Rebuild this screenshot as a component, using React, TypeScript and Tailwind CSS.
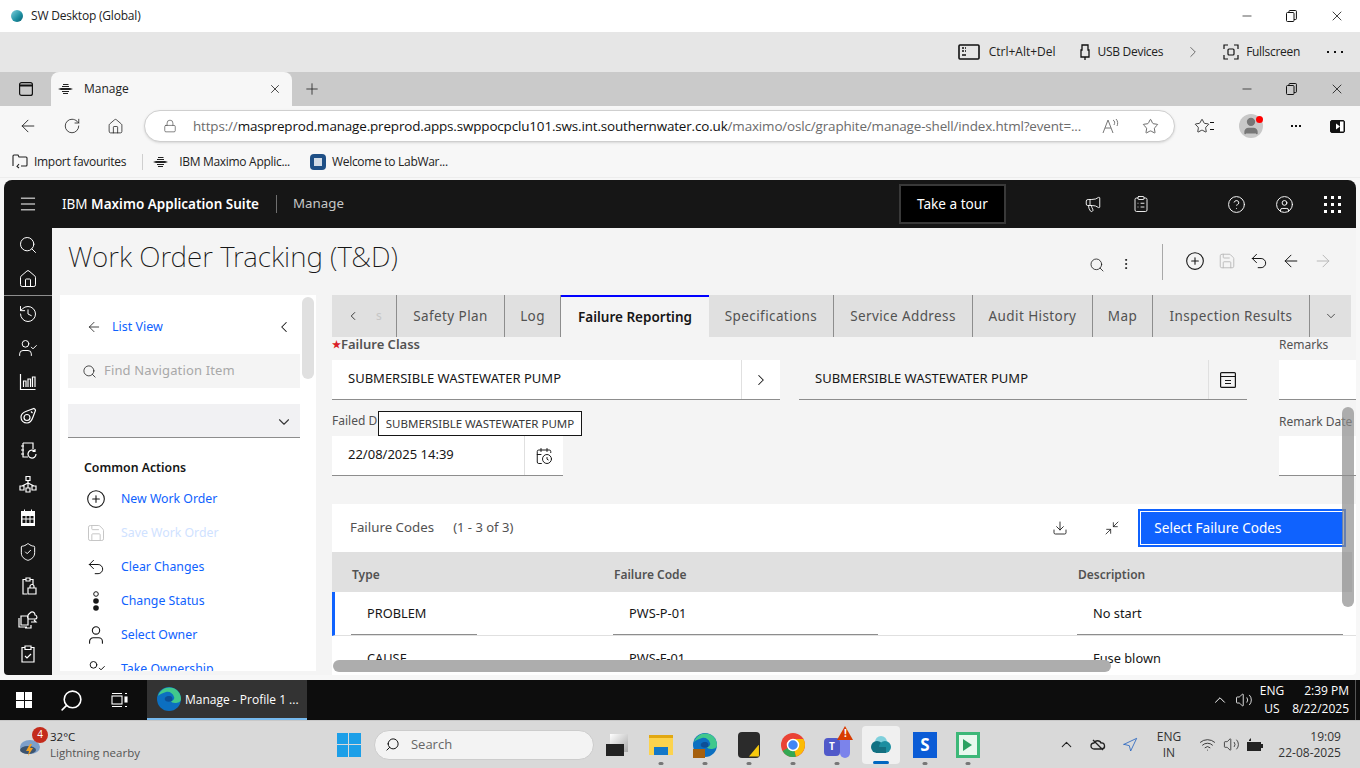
import React from 'react';
import {
  X, Minus, Plus, ChevronRight, ChevronLeft, ChevronDown, ChevronUp, ArrowLeft, ArrowRight, RotateCw, House, Lock,
  Star, Search, Menu, CircleHelp, CircleUser, Volume2, Wifi, Navigation, CirclePlus, Save, Undo2, Download,
  Minimize2, History, UserCheck, ShieldCheck, CalendarClock, ClipboardList, Megaphone, MoreVertical, User,
} from 'lucide-react';

const segoe = 'font-["Open_Sans","Noto_Sans",sans-serif]';
const plex = 'font-["Noto_Sans","Open_Sans",sans-serif]';

function Restore({ size = 11 }: { size?: number }) {
  return (
    <svg width={size} height={size + 1} viewBox="0 0 11 12" fill="none" stroke="#111" strokeWidth="1">
      <rect x="0.5" y="2.5" width="7.5" height="9" rx="1" />
      <path d="M3 2.5V1.2c0-.4.3-.7.7-.7h6c.4 0 .7.3.7.7v7.6c0 .4-.3.7-.7.7H8" />
    </svg>
  );
}

function WindowButtons() {
  return (
    <div className="flex items-center gap-[32px] pr-[15px]">
      <Minus size={14} strokeWidth={1.2} color="#111" />
      <Restore />
      <X size={16} strokeWidth={1.2} color="#111" />
    </div>
  );
}

function Bee() {
  return (
    <svg width="16" height="12" viewBox="0 0 16 12" fill="#222">
      <path d="M5 1h5l1 1H5zM4 3h7v1H4zM3 5h9l3 1-3 1H3L0 6zM4 8h7v1H4zM5 10h5v1H5z" />
    </svg>
  );
}

function SwCloud({ size = 14 }: { size?: number }) {
  return (
    <svg width={size} height={size} viewBox="0 0 14 14">
      <defs>
        <linearGradient id="sw" x1="0" y1="0" x2="1" y2="1">
          <stop offset="0" stopColor="#7fd0dc" />
          <stop offset="0.6" stopColor="#1c8ea0" />
          <stop offset="1" stopColor="#0b5d70" />
        </linearGradient>
      </defs>
      <circle cx="7" cy="7" r="6" fill="url(#sw)" />
    </svg>
  );
}

function EdgeLogo({ size = 24 }: { size?: number }) {
  return (
    <svg width={size} height={size} viewBox="0 0 24 24">
      <circle cx="12" cy="12" r="12" fill="#0c6fc0" />
      <path d="M1 9C3 2 10-1 16 1c5 2 8 6 8 11 0 3-3 4-6 4-2 0-4-1-4-2 2 0 4-2 3-4-1-4-5-6-8-5-4 1-7 3-8 4z" fill="#41c88c" />
      <path d="M12 9c3 0 4 2 3 5-3 1-6 1-7-1-1-2 1-4 4-4z" fill="#0c4f96" />
    </svg>
  );
}

function RailGlyph({ d }: { d: string }) {
  return (
    <svg width="20" height="20" viewBox="0 0 20 20" fill="none" stroke="#fff" strokeWidth="1.2">
      <path d={d} />
    </svg>
  );
}

function RailCalendar() {
  return (
    <svg width="20" height="20" viewBox="0 0 20 20" fill="#fff">
      <path d="M3 3h3V1.5h1V3h6V1.5h1V3h3v15H3zM4.500 8v2.500h3V8zm4 0v2.500h3V8zm4 0v2.500h3V8zm-8 3.500V15h3v-3.500zm4 0V15h3v-3.500zm4 0V15h3v-3.500z" fillRule="evenodd" />
    </svg>
  );
}

function ClassificationIcon() {
  return (
    <svg width="16" height="16" viewBox="0 0 16 16" fill="none" stroke="#161616" strokeWidth="1.200">
      <rect x="0.600" y="0.600" width="14.800" height="14.800" rx="1" />
      <path d="M1 4.500h14M5 8.500h6M5 11.500h6" />
    </svg>
  );
}

function Rail() {
  const s = { size: 20, strokeWidth: 1.2, color: '#fff' };
  return (
    <div className="w-12 shrink-0 bg-[#161616] flex flex-col items-center">
      <div className="h-[68px] w-full border-b border-[#8d8d8d] flex flex-col items-center pt-[7px] gap-3.5">
        <Search {...s} />
        <House {...s} />
      </div>
      <div className="flex flex-col items-center gap-3.5 pt-2">
        <History {...s} />
        <UserCheck {...s} />
        <RailGlyph d="M2.500 2v15.500h15M5.500 15V9h2.500v6M10 15V7h2.500v8M14.500 15V5H17v10" />
        <RailGlyph d="M3 11c0-3 3-5 6-6l7-2.500c1 .5 1.500 1 1.500 2L15 11c-1 3-3 6-6 6-3.500 0-6-2.500-6-6zM6 11.500a3 3 0 1 0 6 0 3 3 0 1 0-6 0zM13 5.500l1.500 1.500" />
        <RailGlyph d="M5 3h10v6M5 3v14h5M3 6h3M3 10h3M3 14h3M18 14a4 4 0 1 1-1.200-2.800M17 9v2.500h-2.500" />
        <RailGlyph d="M8 2.500h4v4H8zM2 12h4v4H2zM14 12h4v4h-4zM8 14h4v4H8zM10 6.500V14M10 9l-6 3M10 9l6 3" />
        <RailCalendar />
        <ShieldCheck {...s} />
        <RailGlyph d="M8 3.500V2h4v1.500h3V9M8 3.500H5V18h4M8 3.500V5h4V3.500M10 12h8v6h-8zM12 12v-1.500a2 2 0 0 1 4 0V12" />
        <RailGlyph d="M3 6h7v9H3zM1 8v9h8M12 3c2-2 5-1 5 2 2 0 3 4 0 4h-6c-2 0-2-4 1-6zM13 12h5l-2-2M7 18h6v-3" />
        <RailGlyph d="M7 3.500V2h6v1.500h3V18H4V3.500zM7 3.500V5.500h6v-2M7 12l2 2 4-4" />
      </div>
    </div>
  );
}

const actions = [
  { label: 'New Work Order', icon: <CirclePlus size={20} strokeWidth={1.3} color="#161616" /> },
  { label: 'Save Work Order', icon: <Save size={20} strokeWidth={1.2} color="#c6c6c6" />, disabled: true },
  { label: 'Clear Changes', icon: <Undo2 size={20} strokeWidth={1.2} color="#161616" /> },
  {
    label: 'Change Status',
    icon: (
      <svg width="10" height="20" viewBox="0 0 10 20" fill="#161616">
        <circle cx="5" cy="3" r="2.300" fill="none" stroke="#161616" />
        <circle cx="5" cy="10" r="2.800" />
        <circle cx="5" cy="17" r="2.800" />
      </svg>
    ),
  },
  { label: 'Select Owner', icon: <User size={22} strokeWidth={1.2} color="#161616" /> },
  { label: 'Take Ownership', icon: <UserCheck size={20} strokeWidth={1.2} color="#161616" /> },
];

function LeftPanel() {
  return (
    <div className={`w-[256px] ml-2 h-[376px] bg-white overflow-hidden relative ${plex}`}>
      <div className="h-[59px] flex items-center pl-[26px] pr-[23px] pt-[5px]">
        <ArrowLeft size={16} strokeWidth={1.2} color="#161616" />
        <span className="ml-2.5 text-[12.5px] text-[#0f62fe]">List View</span>
        <ChevronLeft size={18} strokeWidth={1.4} color="#161616" className="ml-auto" />
      </div>
      <div className="ml-2 mr-4 h-[34px] bg-[#f4f4f4] flex items-center pl-3.5 text-[13px] text-[#a8a8a8] tracking-[0.15px]">
        <Search size={15} strokeWidth={1.2} color="#161616" />
        <span className="ml-[7px]">Find Navigation Item</span>
      </div>
      <div className="ml-2 mr-4 mt-4 h-[34px] bg-[#f1f1f3] border-b border-[#8d8d8d] flex items-center justify-end pr-[7px]">
        <ChevronDown size={18} strokeWidth={1.5} color="#393939" className="mt-0.5" />
      </div>
      <div className="pl-6 pt-[21px] text-[12.3px] font-semibold text-[#161616]">Common Actions</div>
      <div className="mt-[5px] flex flex-col">
        {actions.map(a => (
          <div key={a.label} className="h-[34px] flex items-center shrink-0">
            <div className="w-[61px] pl-[10px] flex justify-center">{a.icon}</div>
            <span className={`text-[12.3px] ${a.disabled ? 'text-[#d0e2ff]' : 'text-[#0f62fe]'}`}>{a.label}</span>
          </div>
        ))}
      </div>
      <div className="absolute top-[2px] right-[2px] w-3 h-[82px] rounded-md bg-[#e0e0e0]" />
    </div>
  );
}

const tabs = [
  { label: 'Safety Plan', w: 'w-[108px]' },
  { label: 'Log', w: 'w-[56px]' },
  { label: 'Failure Reporting', w: 'w-[148px]', active: true },
  { label: 'Specifications', w: 'w-[125px]' },
  { label: 'Service Address', w: 'w-[139px]' },
  { label: 'Audit History', w: 'w-[120px]' },
  { label: 'Map', w: 'w-[60px]' },
  { label: 'Inspection Results', w: 'w-[157px]' },
];

function Tabs() {
  return (
    <div className="w-[1019px] h-[42px] bg-[#e0e0e0] flex text-[13.5px] text-[#525252] tracking-[0.4px] shrink-0">
      <div className="w-[65px] shrink-0 border-r border-[#8d8d8d] flex items-center pl-[14px]">
        <ChevronLeft size={14} strokeWidth={1.4} color="#161616" />
        <span className="ml-4 text-[#c6c6c6] text-[12px]">s</span>
      </div>
      {tabs.map(t => (
        <div
          key={t.label}
          className={`${t.w} shrink-0 flex items-center justify-center pt-px ${
            t.active ? 'bg-[#f4f4f4] border-t-2 border-[#0000ff] font-semibold text-[#161616] tracking-normal' : 'border-r border-[#8d8d8d]'
          }`}
        >
          {t.label}
        </div>
      ))}
      <div className="flex-1 flex items-center justify-center">
        <ChevronDown size={14} strokeWidth={1.2} color="#161616" />
      </div>
    </div>
  );
}

function Field({ text, icon, w, bg }: { text: string; icon: React.ReactNode; w: string; bg: string }) {
  return (
    <div className={`${w} ${bg} h-10 border-b border-[#8d8d8d] flex items-center text-[13px] text-[#161616]`}>
      <span className="flex-1 pl-4 pb-[2px]">{text}</span>
      <div className="w-[39px] h-full border-l border-[#e0e0e0] flex items-center justify-center">{icon}</div>
    </div>
  );
}

const rows = [
  ['PROBLEM', 'PWS-P-01', 'No start'],
  ['CAUSE', 'PWS-F-01', 'Fuse blown'],
];

function FailureCodes() {
  return (
    <div className="w-[1024px] bg-white mt-7 flex-1">
      <div className="h-12 flex items-center pl-[18px]">
        <span className="text-[13.3px] text-[#525252]">Failure Codes</span>
        <span className="ml-[19px] text-[13px] text-[#525252]">(1 - 3 of 3)</span>
        <Download size={16} strokeWidth={1.3} color="#161616" className="ml-[539px]" />
        <Minimize2 size={16} strokeWidth={1.2} color="#161616" className="ml-9" />
        <div className="ml-[18px] w-[208px] h-[38px] border-2 border-[#0f62fe] p-px">
          <div className="h-full bg-[#0f62fe] text-white text-[13.6px] flex items-center pl-[13px]">Select Failure Codes</div>
        </div>
      </div>
      <div className="h-10 bg-[#e0e0e0] flex items-center pt-1.5 text-[12px] font-semibold text-[#525252] w-[1020px]">
        <span className="w-[282px] pl-5">Type</span>
        <span className="w-[464px]">Failure Code</span>
        <span>Description</span>
      </div>
      {rows.map((r, i) => (
        <div key={r[0]} className={`h-11 flex border-b border-[#e0e0e0] text-[12.8px] text-[#161616] ${i === 0 ? 'border-l-[3px] border-l-[#0f62fe]' : 'pl-[3px]'}`}>
          <div className="w-[262px] pl-4">
            <div className={`w-[126px] h-[43px] pl-4 pt-0.5 flex items-center ${i === 0 ? 'border-b border-[#8d8d8d]' : ''}`}>{r[0]}</div>
          </div>
          <div className="w-[464px] pl-4">
            <div className={`w-[265px] h-[43px] pl-4 pt-0.5 flex items-center ${i === 0 ? 'border-b border-[#8d8d8d]' : ''}`}>{r[1]}</div>
          </div>
          <div className="pl-4">
            <div className={`w-[266px] h-[43px] pl-4 pt-0.5 flex items-center ${i === 0 ? 'border-b border-[#8d8d8d]' : ''}`}>{r[2]}</div>
          </div>
        </div>
      ))}
    </div>
  );
}

function RightPane() {
  return (
    <div className={`ml-4 w-[1024px] h-[380px] relative overflow-hidden flex flex-col ${plex}`}>
      <Tabs />
      <div className="flex items-start mt-[1px] text-[12px] text-[#525252]">
        <div className="w-[947px]">
          <div className="h-[22px] font-semibold text-[13px] leading-[12px] flex items-start">
            <span className="text-[#da1e28] text-[10px]">★</span>Failure Class
          </div>
          <div className="flex gap-[19px]">
            <Field text="SUBMERSIBLE WASTEWATER PUMP" icon={<ChevronRight size={18} strokeWidth={1.4} color="#161616" />} w="w-[448px]" bg="bg-white" />
            <Field text="SUBMERSIBLE WASTEWATER PUMP" icon={<ClassificationIcon />} w="w-[448px]" bg="bg-[#f4f4f4]" />
          </div>
          <div className="h-[36px] flex items-end pb-[6px]">Failed D</div>
          <Field text="22/08/2025 14:39" icon={<CalendarClock size={18} strokeWidth={1.3} color="#161616" />} w="w-[231px]" bg="bg-white" />
        </div>
        <div className="flex-1 min-w-0">
          <div className="h-[22px] leading-[14px]">Remarks</div>
          <div className="h-10 bg-white border-b border-[#8d8d8d]" />
          <div className="h-[36px] flex items-end pb-[5px] whitespace-nowrap">Remark Date</div>
          <div className="h-10 bg-white border-b border-[#8d8d8d]" />
        </div>
      </div>
      <FailureCodes />
      <div className="absolute left-[46px] top-[116px] h-[25px] w-[204px] bg-white border border-[#161616] text-[11.5px] text-[#393939] flex items-center justify-center whitespace-nowrap">
        SUBMERSIBLE WASTEWATER PUMP
      </div>
      <div className="absolute left-[1010px] top-[112px] w-3 h-[200px] rounded-md bg-[#8d8d8d]/70" />
      <div className="absolute left-px top-[365px] w-[778px] h-3 rounded-md bg-[#adadad]" />
    </div>
  );
}

function Maximo() {
  return (
    <div className="mx-1 mt-0.5 w-[1352px] h-[495px] rounded-t-lg rounded-b overflow-hidden bg-[#f4f4f4] flex flex-col">
      <div className={`h-12 shrink-0 bg-[#161616] flex items-center text-white ${plex}`}>
        <div className="w-12 flex justify-center"><Menu size={20} strokeWidth={1.2} /></div>
        <span className="ml-2.5 text-[13.5px]">IBM <span className="font-semibold">Maximo Application Suite</span></span>
        <div className="ml-[17px] w-px h-[18px] bg-[#6f6f6f]" />
        <span className="ml-4 text-[13.3px] text-[#c6c6c6]">Manage</span>
        <div className="ml-[555px] w-[107px] h-10 bg-black border-2 border-[#393939] flex items-center justify-center text-[13.6px]">Take a tour</div>
        <Megaphone size={18} strokeWidth={1.2} className="ml-[78px]" />
        <ClipboardList size={18} strokeWidth={1.2} className="ml-[30px]" />
        <CircleHelp size={19} strokeWidth={1.2} className="ml-[77px]" />
        <CircleUser size={19} strokeWidth={1.2} className="ml-[29px]" />
        <div className="ml-[30px] grid grid-cols-3 gap-[4px]">
          {Array.from({ length: 9 }).map((_, i) => (
            <div key={i} className="w-[3px] h-[3px] bg-white" />
          ))}
        </div>
      </div>
      <div className="flex flex-1 min-h-0">
        <Rail />
        <div className="flex-1 flex flex-col">
          <div className={`h-[68px] flex items-start ${plex}`}>
            <h1 className="ml-4 mt-2 w-[331px] text-[27.9px] font-extralight text-[#161616] whitespace-nowrap">Work Order Tracking (T&amp;D)</h1>
            <Search size={16} strokeWidth={1.2} color="#161616" className="ml-[690px] mt-[29px]" />
            <MoreVertical size={14} strokeWidth={1.6} color="#161616" className="ml-[14px] mt-[29px]" />
            <div className="ml-[29px] mt-4 w-px h-9 bg-[#a8a8a8]" />
            <CirclePlus size={20} strokeWidth={1.3} color="#161616" className="ml-[22px] mt-[23px]" />
            <Save size={18} strokeWidth={1.2} color="#b8b8b8" className="ml-[13px] mt-6" />
            <Undo2 size={20} strokeWidth={1.2} color="#161616" className="ml-[13px] mt-[23px]" />
            <ArrowLeft size={20} strokeWidth={1.2} color="#161616" className="ml-3 mt-[23px]" />
            <ArrowRight size={20} strokeWidth={1.2} color="#b8b8b8" className="ml-3 mt-[23px]" />
          </div>
          <div className="flex">
            <LeftPanel />
            <RightPane />
          </div>
        </div>
      </div>
    </div>
  );
}

function BrowserChrome() {
  return (
    <div className={segoe}>
      <div className="h-8 bg-white flex items-center justify-between text-[12px] text-[#222] tracking-[-0.2px]">
        <div className="flex items-center pl-[10px] gap-[7px]"><SwCloud />SW Desktop (Global)</div>
        <WindowButtons />
      </div>
      <div className="h-10 bg-[#e6e6e6] flex items-center justify-end text-[12px] text-[#222] tracking-[-0.3px]">
        <svg width="22" height="16" viewBox="0 0 22 16" fill="none" stroke="#111" strokeWidth="1.6">
          <rect x="1" y="1" width="20" height="14" rx="1" />
          <path d="M4 4h2M7 4h1M4 7h2M7 7h1M4 11h4" />
        </svg>
        <span className="ml-[9px] tracking-normal">Ctrl+Alt+Del</span>
        <svg className="ml-6" width="10" height="16" viewBox="0 0 10 16" fill="none" stroke="#111" strokeWidth="1.3">
          <path d="M2 1h6v5h1v7H1V6h1zM5 13v3M3.500 3.500h0M6.500 3.500h0" />
        </svg>
        <span className="ml-[8px]">USB Devices</span>
        <ChevronRight size={18} strokeWidth={1} color="#444" className="ml-[21px]" />
        <svg className="ml-[21px]" width="16" height="16" viewBox="0 0 16 16" fill="none" stroke="#111" strokeWidth="1.2">
          <path d="M1 5V1h4M11 1h4v4M15 11v4h-4M5 15H1v-4" />
          <rect x="5" y="5" width="6" height="6" rx="1" />
        </svg>
        <span className="ml-[7px]">Fullscreen</span>
        <div className="ml-[27px] mr-[17px] flex gap-[5px]">
          <div className="w-0.5 h-0.5 bg-[#111]" />
          <div className="w-0.5 h-0.5 bg-[#111]" />
          <div className="w-0.5 h-0.5 bg-[#111]" />
        </div>
      </div>
      <div className="h-[34px] bg-[#cacaca] flex items-end justify-between">
        <div className="flex items-end h-full">
          <div className="w-[51px] h-full flex items-center justify-center">
            <svg width="14" height="14" viewBox="0 0 14 14" fill="none" stroke="#111" strokeWidth="1.2">
              <rect x="0.600" y="0.600" width="12.800" height="12.800" rx="2" />
              <path d="M1 3.500h12" strokeWidth="2" />
            </svg>
          </div>
          <div className="w-[241px] h-full bg-[#f7f7f7] rounded-t-lg flex items-center pl-[7px] text-[12px] text-[#222]">
            <Bee />
            <span className="ml-[10px]">Manage</span>
            <X size={14} strokeWidth={1.4} color="#222" className="ml-auto mr-2.5" />
          </div>
          <Plus size={18} strokeWidth={1.1} color="#222" className="ml-[11px] mb-2" />
        </div>
        <div className="h-full flex items-center"><WindowButtons /></div>
      </div>
      <div className="h-10 bg-[#f7f7f7] flex items-center">
        <ArrowLeft size={20} strokeWidth={1.1} color="#222" className="ml-[18px]" />
        <RotateCw size={18} strokeWidth={1.1} color="#222" className="ml-[25px]" />
        <House size={17} strokeWidth={1.1} color="#222" className="ml-[26px]" />
        <div className="ml-[20px] w-[1031px] h-8 bg-white border border-[#cfcfcf] rounded-full flex items-center shadow-sm">
          <Lock size={14} strokeWidth={1.1} color="#444" className="ml-[18px]" />
          <span className="ml-[16px] text-[13.45px] text-[#6b6b6b] whitespace-nowrap tracking-[-0.15px]">
            https://<span className="text-[#111]">maspreprod.manage.preprod.apps.swppocpclu101.sws.int.southernwater.co.uk</span>/maximo/oslc/graphite/manage-shell/index.html?event=...
          </span>
          <svg className="ml-auto" width="18" height="16" viewBox="0 0 18 16" fill="none" stroke="#777" strokeWidth="1">
            <path d="M1 15L6 2l5 13M3 10h6M11 2c2 1 2 3 1 5M14 1c2 2 2 5 1 7" />
          </svg>
          <Star size={17} strokeWidth={1.1} color="#444" className="ml-[22px] mr-[15px]" />
        </div>
        <div className="ml-[19px] relative">
          <Star size={16} strokeWidth={1.2} color="#111" />
          <div className="absolute right-[-4px] top-1 w-1 h-2 border-y border-[#111]" />
        </div>
        <div className="ml-[29px] relative w-6 h-6 rounded-full bg-[#c8c8c8] overflow-hidden flex justify-center">
          <User size={20} fill="#777" color="#777" className="mt-0.5" />
        </div>
        <div className="w-[7px] h-[7px] rounded-full bg-[#f00] ml-[-7px] mb-[14px] z-10" />
        <div className="ml-[28px] flex gap-0.5">
          <div className="w-0.5 h-0.5 bg-[#111]" />
          <div className="w-0.5 h-0.5 bg-[#111]" />
          <div className="w-0.5 h-0.5 bg-[#111]" />
        </div>
        <svg className="ml-[29px]" width="15" height="13" viewBox="0 0 15 13">
          <rect x="0.500" y="0.500" width="14" height="12" rx="1.500" fill="#111" stroke="#111" />
          <path d="M10 6.500L6 3.500v6z" fill="#fff" />
          <rect x="10" y="1.500" width="3.500" height="10" fill="#fff" />
        </svg>
      </div>
      <div className="h-8 bg-[#f7f7f7] flex items-center text-[12px] text-[#222] tracking-[-0.3px] border-b border-[#ededed]">
        <svg className="ml-3" width="16" height="15" viewBox="0 0 16 15" fill="none" stroke="#222" strokeWidth="1.1">
          <path d="M1 12V2c0-.6.4-1 1-1h4l1 2h7c.6 0 1 .4 1 1v7c0 1-.4 1-1 1H9M7 10l-2 2.500L7 14" />
        </svg>
        <span className="ml-[6px]">Import favourites</span>
        <div className="ml-[16px] w-px h-4 bg-[#cfcfcf]" />
        <div className="ml-[10px]"><Bee /></div>
        <span className="ml-[10px]">IBM Maximo Applic...</span>
        <div className="ml-[20px] w-4 h-4 rounded-sm bg-[#1e4f86] flex items-center justify-center">
          <div className="w-2 h-2 bg-white/80" />
        </div>
        <span className="ml-[6px]">Welcome to LabWar...</span>
      </div>
    </div>
  );
}

function WinLogo({ size, color }: { size: number; color: string }) {
  return (
    <div className="grid grid-cols-2 gap-px" style={{ width: size, height: size }}>
      {[0, 1, 2, 3].map(i => (
        <div key={i} style={{ background: color }} />
      ))}
    </div>
  );
}

function InnerTaskbar() {
  return (
    <div className={`h-10 bg-[#0d0d0d] flex items-center text-white ${segoe}`}>
      <div className="ml-4"><WinLogo size={16} color="#fff" /></div>
      <Search size={25} strokeWidth={1.5} color="#fff" className="ml-[27px] -scale-x-100" />
      <svg className="ml-[27px]" width="17" height="16" viewBox="0 0 17 16" fill="none" stroke="#fff" strokeWidth="1.100">
        <rect x="1" y="4" width="10" height="8" />
        <path d="M1 1.500h10M1 14.500h10" />
        <rect x="14" y="5" width="2" height="5" fill="#fff" />
        <path d="M14 1.500h2M14 14.500h2" />
      </svg>
      <div className="ml-[19px] w-40 h-10 bg-[#333] border-b-2 border-[#76b9ed] flex items-center pl-2.5">
        <EdgeLogo />
        <span className="ml-1 pt-0.5 text-[12px] whitespace-nowrap">Manage - Profile 1 ...</span>
      </div>
      <ChevronUp size={18} strokeWidth={1.3} className="ml-[904px]" />
      <Volume2 size={18} strokeWidth={1.1} className="ml-[6px]" />
      <div className="ml-[3px] w-8 text-center text-[12px] leading-[18px]">ENG<br />US</div>
      <div className="ml-px w-[60px] text-right text-[12px] leading-[18px] whitespace-nowrap">2:39 PM<br />8/22/2025</div>
      <div className="ml-[6px] w-px h-full bg-[#555]" />
    </div>
  );
}

function Dot() {
  return <div className="w-[5px] h-[3px] rounded-full bg-[#777] absolute bottom-[-1px] left-1/2 -translate-x-1/2" />;
}

function OuterTaskbar() {
  return (
    <div className={`h-12 bg-[#d9d9d9] flex items-center border-t border-[#c8c8c8] ${segoe}`}>
      <div className="ml-5 w-6 h-6 relative">
        <svg width="24" height="24" viewBox="0 0 24 24">
          <ellipse cx="10" cy="14" rx="10" ry="7" fill="#7d9fca" />
          <ellipse cx="8" cy="17" rx="8" ry="4" fill="#3c5470" />
          <path d="M10 11l-4 7h3l-1 5 5-8h-3l2-4z" fill="#f4a021" />
        </svg>
        <div className="absolute -top-1.5 -right-1 w-4 h-4 rounded-full bg-[#c42b1c] text-white text-[10px] flex items-center justify-center">4</div>
      </div>
      <div className="ml-1.5 text-[11.5px] leading-4 whitespace-nowrap">
        <div className="text-[#222]">32°C</div>
        <div className="text-[#555]">Lightning nearby</div>
      </div>
      <div className="ml-[197px]"><WinLogo size={24} color="#1c9fe8" /></div>
      <div className="ml-[13px] w-[220px] h-[30px] rounded-full bg-[#f3f3f3] border border-[#cccccc] flex items-center pl-2.5 text-[13px] text-[#666]">
        <Search size={15} strokeWidth={1.6} color="#111" className="-scale-x-100" />
        <span className="ml-[11px]">Search</span>
      </div>
      <div className="ml-[8px] flex items-center">
        <div className="w-[30px] h-[30px] flex items-center justify-center relative">
          <div className="w-[18px] h-[18px] bg-gradient-to-br from-white to-[#aaa] absolute top-1 right-1" />
          <div className="w-[18px] h-3 bg-[#222] absolute bottom-1 left-1" />
        </div>
        <div className="ml-[14px] w-[30px] h-[38px] relative flex items-center justify-center">
          <div className="w-[24px] h-[20px] bg-[#fcd34d] border-t-[3px] border-[#e2a812] relative flex items-end justify-center">
            <div className="w-[14px] h-2 bg-[#1478c8]" />
          </div>
          <Dot />
        </div>
        <div className="ml-[14px] w-[30px] h-[38px] relative flex items-center justify-center">
          <EdgeLogo size={24} />
          <div className="absolute bottom-[6px] left-[3px] w-[12px] h-[9px] bg-[#a5600f]" />
          <Dot />
        </div>
        <div className="ml-[14px] w-[30px] h-[38px] relative flex items-center justify-center">
          <div className="w-[22px] h-[26px] bg-[#2b2b2b] rounded-sm" />
          <div className="absolute bottom-[7px] right-[5px] w-[10px] h-[12px] bg-[#f6c90e] [clip-path:polygon(100%_0,100%_100%,0_100%)]" />
          <Dot />
        </div>
        <div className="ml-[14px] w-[30px] h-[38px] relative flex items-center justify-center">
          <svg width="26" height="26" viewBox="0 0 26 26">
            <circle cx="13" cy="13" r="12" fill="#ea4335" />
            <path d="M13 13L2.600 19A12 12 0 0 0 13 25c1 0 2 0 3-.5z" fill="#34a853" />
            <path d="M13 13l3 11.500A12 12 0 0 0 23.400 7H13z" fill="#fbbc05" />
            <circle cx="13" cy="13" r="5.500" fill="#4285f4" stroke="#fff" strokeWidth="1.500" />
          </svg>
          <Dot />
        </div>
        <div className="ml-[14px] w-[30px] h-[38px] relative flex items-center justify-center">
          <div className="w-[16px] h-[18px] rounded-sm bg-[#5059c9] text-white text-[10px] font-bold flex items-center justify-center mt-1">T</div>
          <div className="w-[10px] h-[18px] rounded-b-full bg-[#7b83eb] mt-2" />
          <div className="absolute top-0 right-[-1px] w-0 h-0 border-x-[8px] border-x-transparent border-b-[14px] border-b-[#d83b01]" />
          <span className="absolute top-0 right-[5px] text-white text-[10px] font-bold leading-[14px]">!</span>
          <Dot />
        </div>
        <div className="ml-[10px] w-[38px] h-[38px] bg-[#f0f0f0] rounded relative flex items-center justify-center">
          <svg width="22" height="20" viewBox="0 0 22 20">
            <circle cx="11" cy="7" r="6" fill="#7fd0dc" />
            <circle cx="7" cy="12" r="6" fill="#0f7183" />
            <circle cx="15" cy="12" r="6" fill="#1c8ea0" />
            <rect x="6" y="12" width="10" height="6" fill="#146f80" />
          </svg>
          <div className="absolute bottom-0 left-1/2 -translate-x-1/2 w-4 h-[3px] rounded-full bg-[#0067c0]" />
        </div>
        <div className="ml-[10px] w-[30px] h-[38px] relative flex items-center justify-center">
          <div className="w-6 h-[26px] bg-[#0b5cd6] text-white text-[17px] font-bold flex items-center justify-center">S</div>
          <Dot />
        </div>
        <div className="ml-[13px] w-[30px] h-[38px] relative flex items-center justify-center">
          <div className="w-6 h-[26px] bg-[#3cb878] flex items-center justify-center">
            <div className="w-[18px] h-5 bg-[#e8f8ee] flex items-center justify-center">
              <div className="w-0 h-0 border-y-[6px] border-y-transparent border-l-[9px] border-l-[#2aa260]" />
            </div>
          </div>
          <Dot />
        </div>
      </div>
      <ChevronUp size={17} strokeWidth={1.5} color="#222" className="ml-[75px]" />
      <svg className="ml-[15px]" width="16" height="16" viewBox="0 0 16 16" fill="none" stroke="#222" strokeWidth="1.3">
        <path d="M4 12a3 3 0 0 1 0-6c1-3 6-3 7 0a3 3 0 0 1 1 6zM3 3l10 10" />
      </svg>
      <Navigation size={16} strokeWidth={1.2} color="#1f5fbf" className="ml-[16px]" />
      <div className="ml-[15px] w-8 text-center text-[12px] leading-[16px] text-[#333]">ENG<br />IN</div>
      <Wifi size={17} strokeWidth={1.2} color="#222" className="ml-[14px]" />
      <Volume2 size={17} strokeWidth={1.1} color="#222" className="ml-[7px]" />
      <svg className="ml-[6px]" width="18" height="14" viewBox="0 0 18 14" fill="#222">
        <path d="M1 4h14v9H1zM15 6h2v4h-2zM3 2l2-2v3H3z" />
      </svg>
      <div className="ml-[9px] w-[68px] text-right text-[12px] leading-4 text-[#333] whitespace-nowrap">19:09<br />22-08-2025</div>
    </div>
  );
}

export default function App() {
  return (
    <div className="w-[1360px] h-[768px] overflow-hidden bg-[#f7f7f7]">
      <BrowserChrome />
      <Maximo />
      <div className="h-[5px]" />
      <InnerTaskbar />
      <OuterTaskbar />
    </div>
  );
}
